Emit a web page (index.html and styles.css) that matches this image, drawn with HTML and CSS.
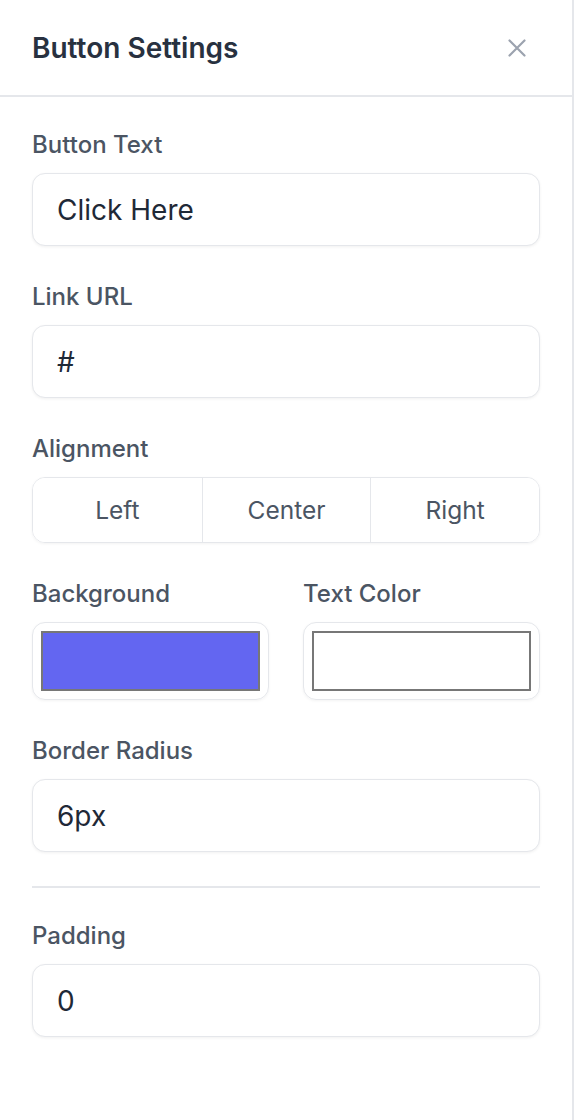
FILE: index.html
```html
<!DOCTYPE html>
<html>

  <head>
    <title>Button Settings</title>
    <link rel="stylesheet" href="styles.css">
  </head>

  <body>
    <div class="panel">
      <div class="panel-header">
        <p class="title">Button Settings</p>
        <button class="close-button">
          <svg width="18" height="18" viewBox="0 0 18 18">
            <path d="M1.5 1.5 L16.5 16.5 M16.5 1.5 L1.5 16.5" stroke="#9ca3af" stroke-width="2.2" stroke-linecap="round"/>
          </svg>
        </button>
      </div>

      <div class="panel-body">
        <div class="field">
          <label class="field-label">Button Text</label>
          <input class="text-input" type="text" value="Click Here">
        </div>

        <div class="field">
          <label class="field-label">Link URL</label>
          <input class="text-input" type="text" value="#">
        </div>

        <div class="field">
          <label class="field-label">Alignment</label>
          <div class="align-group">
            <button class="align-button">Left</button>
            <button class="align-button">Center</button>
            <button class="align-button">Right</button>
          </div>
        </div>

        <div class="field color-row">
          <div>
            <label class="field-label">Background</label>
            <div class="color-box">
              <div class="swatch swatch-indigo"></div>
            </div>
          </div>
          <div>
            <label class="field-label">Text Color</label>
            <div class="color-box">
              <div class="swatch swatch-white"></div>
            </div>
          </div>
        </div>

        <div class="field">
          <label class="field-label">Border Radius</label>
          <input class="text-input" type="text" value="6px">
        </div>

        <hr class="divider">

        <div class="field">
          <label class="field-label">Padding</label>
          <input class="text-input" type="text" value="0">
        </div>
      </div>
    </div>
  </body>

</html>
```

FILE: styles.css
```css
body{
  margin: 0;
  background-color: white;
  font-family: Inter, "Noto Sans", sans-serif;
  color: #1f2937;
}

.panel{
  min-height: 1120px;
  border-right: 2px solid #e5e7eb;
  box-sizing: border-box;
}

.panel-header{
  height: 95px;
  border-bottom: 2px solid #e5e7eb;
  padding: 0 40px 0 32px;
  display: flex;
  align-items: center;
  justify-content: space-between;
}

.title{
  margin: 0;
  font-size: 28px;
  font-weight: 600;
  color: #283140;
}

.close-button{
  background: transparent;
  border: none;
  padding: 0;
  width: 30px;
  height: 30px;
  display: flex;
  align-items: center;
  justify-content: center;
  cursor: pointer;
}

.panel-body{
  padding: 33px 32px 0 32px;
  display: flex;
  flex-direction: column;
  gap: 36px;
}

.field-label{
  display: block;
  font-size: 24px;
  line-height: 30px;
  font-weight: 500;
  color: #4b5563;
  margin-bottom: 13px;
}

.text-input{
  display: block;
  box-sizing: border-box;
  width: 100%;
  height: 73px;
  border: 1.5px solid #e5e7eb;
  border-radius: 13px;
  box-shadow: 0 1px 3px rgba(0, 0, 0, 0.06);
  padding: 0 24px;
  font-family: Inter, sans-serif;
  font-size: 28px;
  color: #1f2937;
  background-color: white;
  outline: none;
}

.align-group{
  display: grid;
  grid-template-columns: 1fr 1fr 1fr;
  height: 66px;
  border: 1.5px solid #e5e7eb;
  border-radius: 13px;
  box-sizing: border-box;
  overflow: hidden;
  box-shadow: 0 1px 3px rgba(0, 0, 0, 0.05);
}

.align-button{
  background-color: white;
  border: none;
  border-left: 1.5px solid #e5e7eb;
  font-family: Inter, sans-serif;
  font-size: 24.5px;
  color: #4b5563;
  cursor: pointer;
}

.align-button:first-child{
  border-left: none;
}

.color-row{
  display: grid;
  grid-template-columns: 1fr 1fr;
  column-gap: 34px;
}

.color-box{
  height: 78px;
  box-sizing: border-box;
  border: 1.5px solid #e5e7eb;
  border-radius: 13px;
  padding: 8px 8px;
  box-shadow: 0 1px 3px rgba(0, 0, 0, 0.05);
}

.swatch{
  height: 100%;
  box-sizing: border-box;
  border: 2px solid #777777;
}

.swatch-indigo{
  background-color: #6366f1;
}

.swatch-white{
  background-color: white;
}

.divider{
  margin: -2px 0 -3px 0;
  border: none;
  border-top: 2px solid #e5e7eb;
}
```
